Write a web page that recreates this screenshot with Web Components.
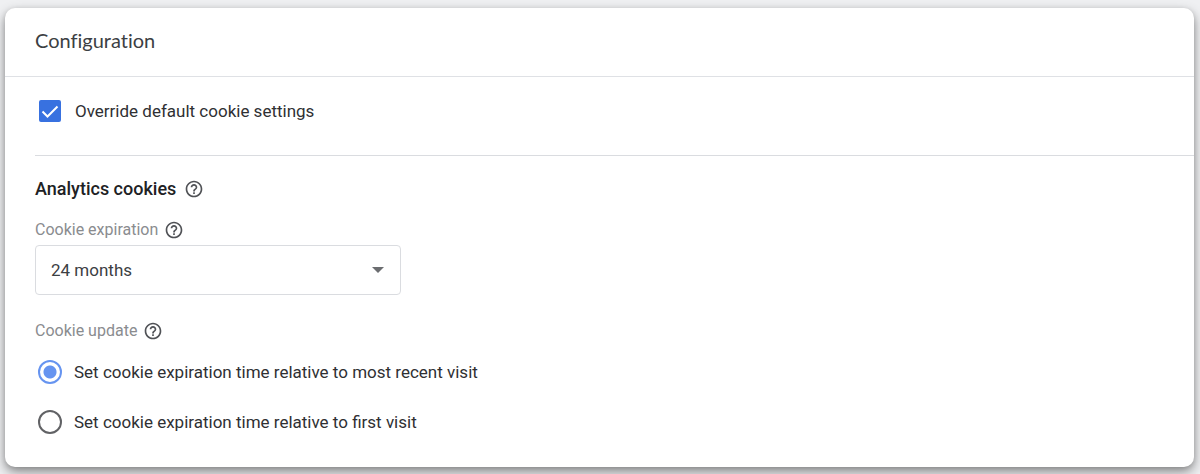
<!DOCTYPE html>
<html lang="en">
<head>
<meta charset="utf-8">
<meta name="viewport" content="width=device-width, initial-scale=1">
<title>Configuration</title>
<style>
  body {
    margin: 0;
    padding: 8px 6px 7px 5px;
    background: #eff0f2;
    color: #2f3033;
    font: 17px/24px Roboto, "Liberation Sans", sans-serif;
  }
</style>
</head>
<body>
<settings-card>
  <span slot="title">Configuration</span>
  <check-option slot="override" checked label="Override default cookie settings"></check-option>
  <section-heading>Analytics cookies</section-heading>
  <select-field label="Cookie expiration" options="24 months|18 months|12 months|6 months|1 month"></select-field>
  <radio-field label="Cookie update" options="Set cookie expiration time relative to most recent visit|Set cookie expiration time relative to first visit"></radio-field>
</settings-card>

<script>
  class BaseElement extends HTMLElement {
    connectedCallback() {
      if (this.shadowRoot) return;
      this.attachShadow({ mode: 'open' }).innerHTML = this.render();
    }
    get label() { return this.getAttribute('label') || ''; }
    get options() { return (this.getAttribute('options') || '').split('|'); }
  }

  customElements.define('settings-card', class extends BaseElement {
    render() {
      return `
        <style>
          :host {
            display: block;
            background: #fff;
            border-radius: 10px;
            box-shadow: 0 5px 12px rgba(0, 0, 0, .42), 0 1px 5px rgba(0, 0, 0, .1);
          }
          header { padding: 20px 30px 24px; border-bottom: 1px solid #dfe1e5; }
          h1 { margin: 0; font: 400 20px/24px Lato, sans-serif; font-variant-ligatures: none; color: #3c4043; }
          .override { margin-left: 30px; padding: 22px 0 32px; border-bottom: 1px solid #dadce0; }
          .body { padding: 21px 30px 33px; }
        </style>
        <header><h1><slot name="title"></slot></h1></header>
        <div class="override"><slot name="override"></slot></div>
        <div class="body"><slot></slot></div>`;
    }
  });

  customElements.define('help-button', class extends BaseElement {
    render() {
      return `
        <style>
          :host { display: inline-flex; }
          button { display: flex; padding: 0; border: 0; background: none; color: #505256; cursor: pointer; }
          svg { display: block; width: 20px; height: 20px; fill: currentColor; }
        </style>
        <button type="button" aria-label="Help">
          <svg viewBox="0 0 24 24" aria-hidden="true"><path d="M11 18h2v-2h-2v2zm1-16C6.480 2 2 6.480 2 12s4.480 10 10 10 10-4.480 10-10S17.520 2 12 2zm0 18c-4.410 0-8-3.590-8-8s3.590-8 8-8 8 3.590 8 8-3.590 8-8 8zm0-14c-2.210 0-4 1.790-4 4h2c0-1.100.9-2 2-2s2 .9 2 2c0 2-3 1.750-3 5h2c0-2.250 3-2.500 3-5 0-2.210-1.790-4-4-4z"/></svg>
        </button>`;
    }
  });

  customElements.define('section-heading', class extends BaseElement {
    render() {
      return `
        <style>
          :host { display: flex; align-items: center; gap: 8px; }
          h2 { margin: 0; font-size: 18px; line-height: 24px; font-weight: 500; color: #202124; }
        </style>
        <h2><slot></slot></h2><help-button></help-button>`;
    }
  });

  customElements.define('check-option', class extends BaseElement {
    render() {
      return `
        <style>
          :host { display: block; }
          label { display: flex; align-items: center; gap: 14px; padding-left: 4px; }
          .box { display: grid; flex: none; }
          .box > * { grid-area: 1 / 1; }
          input { appearance: none; width: 22px; height: 22px; margin: 0; border: 2px solid #5f6368; border-radius: 2px; }
          input:checked { border-color: #3871e0; background: #3871e0; }
          svg { width: 22px; height: 22px; fill: none; stroke: #fff; stroke-width: 2; pointer-events: none; }
          input:not(:checked) + svg { visibility: hidden; }
        </style>
        <label>
          <span class="box">
            <input type="checkbox" ${this.hasAttribute('checked') ? 'checked' : ''}>
            <svg viewBox="0 0 22 22" aria-hidden="true"><path d="M3.500 11.500l5 5L18.500 6.500"/></svg>
          </span>
          <span>${this.label}</span>
        </label>`;
    }
  });

  customElements.define('select-field', class extends BaseElement {
    render() {
      return `
        <style>
          :host { display: block; margin-top: 17px; }
          .caption { display: flex; align-items: center; gap: 6px; margin-bottom: 3px; }
          label { font-size: 16px; color: #8a8c8f; }
          .control { display: grid; align-items: center; max-width: 366px; }
          .control > * { grid-area: 1 / 1; }
          select {
            appearance: none; box-sizing: border-box; width: 100%; height: 50px; padding: 0 40px 0 15px;
            border: 1px solid #dadce0; border-radius: 4px; background: #fff; font: inherit; color: #3c4043;
          }
          svg { justify-self: end; width: 12px; height: 6px; margin-right: 17px; fill: #6b6d70; pointer-events: none; }
        </style>
        <div class="caption"><label for="choice">${this.label}</label><help-button></help-button></div>
        <div class="control">
          <select id="choice">${this.options.map(o => `<option>${o}</option>`).join('')}</select>
          <svg viewBox="0 0 12 6" aria-hidden="true"><path d="M0 0h12L6 6z"/></svg>
        </div>`;
    }
  });

  customElements.define('radio-field', class extends BaseElement {
    render() {
      return `
        <style>
          :host { display: block; margin-top: 24px; }
          .caption { display: flex; align-items: center; gap: 6px; margin-bottom: 17px; font-size: 16px; color: #8a8c8f; }
          .choices { display: grid; gap: 26px; }
          label { display: flex; align-items: center; gap: 12px; padding-left: 3px; }
          input {
            appearance: none; flex: none; box-sizing: border-box; width: 24px; height: 24px; margin: 0;
            border: 2px solid #616265; border-radius: 50%;
          }
          input:checked { border-color: #6694f0; background: radial-gradient(circle, #6694f0 6px, transparent 7px); }
        </style>
        <div role="radiogroup" aria-labelledby="caption">
          <div class="caption"><span id="caption">${this.label}</span><help-button></help-button></div>
          <div class="choices">
            ${this.options.map((o, i) => `<label><input type="radio" name="choice" ${i ? '' : 'checked'}><span>${o}</span></label>`).join('')}
          </div>
        </div>`;
    }
  });
</script>
</body>
</html>
